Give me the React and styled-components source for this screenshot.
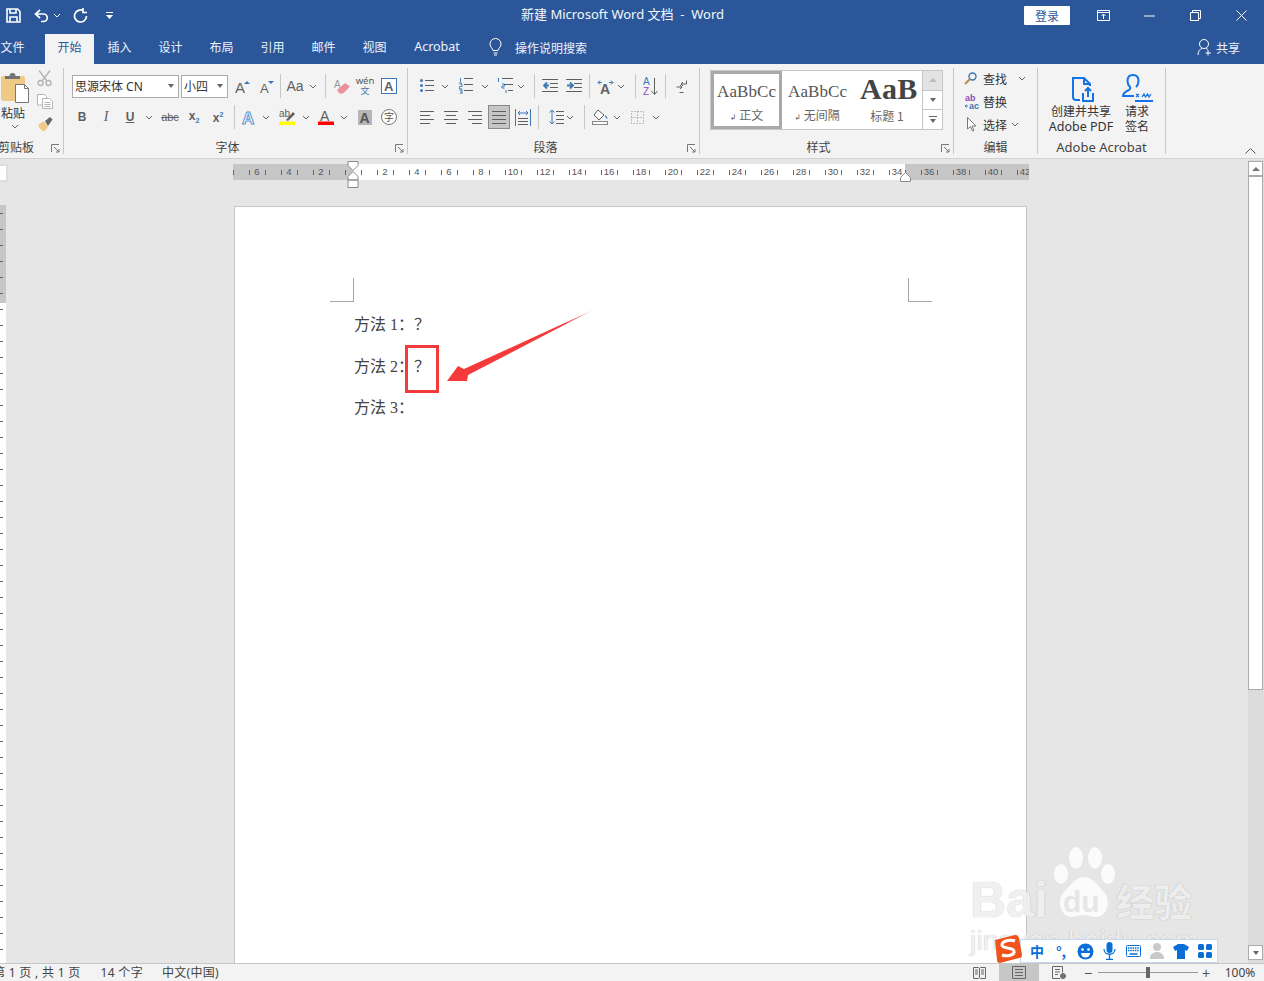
import React from 'react';
import styled, { createGlobalStyle } from 'styled-components';

const UI = '"Noto Sans CJK SC", "Noto Sans", sans-serif';
const LATIN = '"Noto Sans", "Noto Sans CJK SC", sans-serif';
const BLUE = '#2b579a';
const GREY = '#5f5f5f';
const ICON_BLUE = '#3b78b5';
const ACROBAT = '#1473e6';
const IME = '#0a6ed6';

const Global = createGlobalStyle`
  html, body { margin: 0; padding: 0; background: #e6e6e6; }
  body { font-family: ${UI}; font-size: 12px; color: #444; }
`;

const Window = styled.div`
  position: relative;
  width: 1264px;
  height: 981px;
  overflow: hidden;
  display: flex;
  flex-direction: column;
`;

/* title bar */
const TitleBar = styled.div`
  flex: 0 0 34px;
  display: flex;
  align-items: center;
  background: ${BLUE};
  color: #fff;
  padding-bottom: 3px;
  box-sizing: border-box;
`;
const QuickAccess = styled.div`
  flex: 0 0 521px;
  display: flex;
  align-items: center;
`;
const QuickBtn = styled.div`
  flex: 0 0 ${(p) => p.$w}px;
  width: ${(p) => p.$w}px;
  display: flex;
  justify-content: center;
  & > * { flex-shrink: 0; }
`;
const DocTitle = styled.div`
  font-family: ${LATIN};
  font-size: 13px;
  white-space: pre;
  color: #f4f7fb;
  margin-bottom: 4px;
`;
const WinControls = styled.div`
  margin-left: auto;
  display: flex;
  align-items: center;
`;
const LoginBtn = styled.div`
  width: 46px;
  height: 19px;
  margin-right: 10px;
  background: #fff;
  border-radius: 1px;
  color: ${BLUE};
  font-size: 12px;
  line-height: 19px;
  text-align: center;
`;
const WinBtn = styled.div`
  width: 46px;
  display: flex;
  justify-content: center;
`;

/* tabs */
const TabBar = styled.div`
  flex: 0 0 30px;
  display: flex;
  align-items: stretch;
  background: ${BLUE};
  color: #eef2f8;
`;
const Tab = styled.div`
  flex: 0 0 auto;
  width: ${(p) => (p.$active ? 49 : p.$w || 51)}px;
  margin-left: ${(p) => p.$ml || 0}px;
  display: flex;
  align-items: center;
  justify-content: center;
  font-size: ${(p) => (p.$latin ? 12.5 : 12)}px;
  padding-bottom: 5px;
  box-sizing: border-box;
  background: ${(p) => (p.$active ? '#f3f3f3' : 'transparent')};
  color: ${(p) => (p.$active ? BLUE : '#eef2f8')};
  font-family: ${(p) => (p.$latin ? LATIN : UI)};
`;
const SearchHint = styled.div`
  display: flex;
  align-items: center;
  gap: 13px;
  margin-left: 15px;
  padding-bottom: 4px;
  font-size: 12px;
`;
const ShareBtn = styled.div`
  margin-left: auto;
  padding: 0 24px 4px 0;
  display: flex;
  align-items: center;
  gap: 4px;
  font-size: 12px;
`;

/* ribbon */
const Ribbon = styled.div`
  flex: 0 0 95px;
  min-height: 0;
  box-sizing: border-box;
  display: flex;
  padding: 4px 0 4px;
  background: #f3f3f3;
  border-bottom: 1px solid #d2d2d2;
`;
const Group = styled.div`
  flex: 0 0 ${(p) => p.$w}px;
  height: 86px;
  box-sizing: border-box;
  display: flex;
  flex-direction: column;
  border-right: 1px solid #c6c6c6;
`;
const GroupBody = styled.div`
  flex: 1;
  min-height: 0;
  display: ${(p) => (p.$row ? 'flex' : 'block')};
  padding-left: ${(p) => p.$pl || 0}px;
  padding-top: ${(p) => (p.$pt === undefined ? 6 : p.$pt)}px;
  margin-top: ${(p) => p.$mt || 0}px;
`;
const GroupFoot = styled.div`
  flex: 0 0 14px;
  display: flex;
  align-items: center;
`;
const GroupLabel = styled.div`
  flex: 1;
  text-align: center;
  font-size: ${(p) => (p.$latin ? 13 : 12)}px;
  line-height: 14px;
  color: #444;
  white-space: nowrap;
  margin-left: ${(p) => p.$ml || 0}px;
  font-family: ${(p) => (p.$latin ? LATIN : UI)};
`;
const Launcher = styled.div`
  flex: 0 0 16px;
  display: flex;
  justify-content: center;
  padding-top: 3px;
`;
const Row = styled.div`
  display: flex;
  align-items: center;
  height: 24px;
  margin-bottom: 7px;
`;
const Cell = styled.div`
  flex: 0 0 ${(p) => p.$w}px;
  width: ${(p) => p.$w}px;
  height: 24px;
  margin-left: ${(p) => p.$ml || 0}px;
  display: flex;
  align-items: center;
  justify-content: center;
  box-sizing: border-box;
  background: ${(p) => (p.$on ? '#c6c6c6' : 'transparent')};
  border: ${(p) => (p.$on ? '1px solid #8a8a8a' : 'none')};
  & > * { flex-shrink: 0; }
`;
const VSep = styled.div`
  flex: 0 0 ${(p) => p.$w}px;
  height: 24px;
  margin-left: ${(p) => p.$ml || 0}px;
  display: flex;
  justify-content: center;
  &::after {
    content: '';
    width: 1px;
    height: 100%;
    background: #c6c6c6;
  }
`;
const Glyph = styled.span`
  font-family: ${(p) => p.$font || '"Liberation Sans", sans-serif'};
  font-size: ${(p) => p.$size || 12}px;
  font-weight: ${(p) => p.$weight || 400};
  font-style: ${(p) => (p.$italic ? 'italic' : 'normal')};
  color: ${(p) => p.$color || GREY};
  text-decoration: ${(p) => p.$deco || 'none'};
  line-height: 1;
  white-space: nowrap;
`;
const Select = styled.div`
  flex: 0 0 ${(p) => p.$w}px;
  height: 23px;
  box-sizing: border-box;
  margin-right: ${(p) => p.$mr || 0}px;
  padding: 0 4px 0 2px;
  display: flex;
  align-items: center;
  justify-content: space-between;
  background: #fff;
  border: 1px solid #ababab;
  font-size: 12px;
  color: #333;
  font-family: ${LATIN};
`;
const Caret = styled.span`
  width: 0;
  height: 0;
  border-left: 3.5px solid transparent;
  border-right: 3.5px solid transparent;
  border-top: 4px solid ${(p) => p.$color || '#666'};
`;

/* clipboard */
const PasteCol = styled.div`
  flex: 0 0 30px;
  display: flex;
  flex-direction: column;
  align-items: flex-start;
  padding-top: 4px;
`;
const PasteLabel = styled.div`
  font-size: 12px;
  line-height: 15px;
  margin: 2px 0 4px 1px;
  color: #333;
`;
const PasteChevron = styled.div`
  width: 30px;
  height: 6px;
  display: flex;
  justify-content: center;
`;
const ClipTools = styled.div`
  flex: 1;
  display: flex;
  flex-direction: column;
  align-items: center;
  margin-top: -1px;
  padding-right: 4px;
`;
const ClipTool = styled.div`
  height: 23px;
  display: flex;
  align-items: center;
`;

/* styles gallery */
const Gallery = styled.div`
  margin: 2px 0 0 10px;
  width: 233px;
  height: 60px;
  box-sizing: border-box;
  display: flex;
  background: #fff;
  border: 1px solid #c6c6c6;
`;
const StyleItem = styled.div`
  flex: 0 0 ${(p) => p.$w}px;
  box-sizing: border-box;
  overflow: hidden;
  display: flex;
  flex-direction: column;
  align-items: center;
  border: ${(p) => (p.$on ? '3px solid #a9a9a9' : '3px solid transparent')};
`;
const StyleSample = styled.div`
  height: 33px;
  display: flex;
  align-items: center;
  font-family: "Liberation Serif", serif;
  font-size: ${(p) => (p.$big ? 30 : 17)}px;
  font-weight: ${(p) => (p.$big ? 700 : 400)};
  color: ${(p) => (p.$big ? '#444' : '#555')};
  white-space: nowrap;
  letter-spacing: ${(p) => (p.$big ? 0.3 : 0.1)}px;
  width: 100%;
  padding: ${(p) => (p.$big ? '0 0 3px 5px' : '3px 0 0 3px')};
  box-sizing: border-box;
`;
const StyleName = styled.div`
  font-size: 12px;
  line-height: 16px;
  margin-top: 1px;
  color: #666;
  font-family: ${UI};
  white-space: nowrap;
`;
const Para = styled.span`
  font-family: "DejaVu Sans", sans-serif;
  font-size: 8px;
  margin-right: 3px;
  color: #666;
`;
const GalleryScroll = styled.div`
  flex: 1;
  display: flex;
  flex-direction: column;
  border-left: 1px solid #c6c6c6;
`;
const ScrollCell = styled.div`
  flex: 1;
  display: flex;
  align-items: center;
  justify-content: center;
  flex-direction: column;
  gap: 2px;
  background: ${(p) => (p.$off ? '#e3e3e3' : '#fff')};
  border-top: ${(p) => (p.$first ? 'none' : '1px solid #c6c6c6')};
`;
const UpCaret = styled.span`
  width: 0;
  height: 0;
  border-left: 4px solid transparent;
  border-right: 4px solid transparent;
  border-bottom: 4px solid ${(p) => p.$color || '#777'};
`;
const CaretBar = styled.span`
  width: 8px;
  height: 1px;
  background: #666;
`;

/* editing */
const EditRow = styled.div`
  height: 23px;
  display: flex;
  align-items: center;
  padding-left: ${(p) => p.$pl || 10}px;
`;
const EditIcon = styled.div`
  flex: 0 0 ${(p) => p.$w || 19}px;
  display: flex;
  justify-content: flex-start;
`;
const EditText = styled.div`
  font-size: 12px;
  color: #333;
  margin-right: ${(p) => p.$mr || 0}px;
`;

/* acrobat */
const BigBtn = styled.div`
  flex: 0 0 ${(p) => p.$w}px;
  display: flex;
  flex-direction: column;
  align-items: center;
  padding-top: 4px;
`;
const BigIcon = styled.div`
  height: 30px;
  display: flex;
  align-items: flex-end;
  padding-left: ${(p) => p.$pl || 0}px;
`;
const BigText = styled.div`
  margin-top: 2px;
  text-align: center;
  font-size: 12px;
  line-height: 15px;
  color: #333;
  font-family: ${LATIN};
  white-space: nowrap;
`;
const LatinLine = styled.span`
  font-size: 12.5px;
`;
const Collapse = styled.div`
  flex: 1;
  display: flex;
  align-items: flex-end;
  justify-content: flex-end;
  padding: 0 8px 0 0;
`;

/* document */
const DocArea = styled.div`
  flex: 1;
  min-height: 0;
  display: flex;
  background: #e6e6e6;
  overflow: hidden;
`;
const VColumn = styled.div`
  flex: 0 0 8px;
  display: flex;
  flex-direction: column;
  overflow: hidden;
`;
const TabPicker = styled.div`
  margin-top: 5px;
  height: 18px;
  width: 8px;
  flex: 0 0 auto;
  box-sizing: border-box;
  background: #fff;
  border: 2px solid #dedede;
  border-left: none;
`;
const VRuler = styled.div`
  margin-top: 23px;
  width: 6px;
  flex: 1;
  overflow: hidden;
  background: linear-gradient(#c6c6c6 0, #c6c6c6 98px, #fff 98px);
`;
const VTick = styled.div`
  height: 16px;
  display: flex;
  align-items: center;
  &::before {
    content: '';
    width: 3px;
    height: 1px;
    background: #666;
  }
`;
const DocCenter = styled.div`
  flex: 1;
  min-width: 0;
  display: flex;
  flex-direction: column;
`;
const RulerWrap = styled.div`
  position: relative;
  flex: 0 0 16px;
  margin: 5px 0 0 225px;
  width: 796px;
`;
const RulerTrack = styled.div`
  height: 16px;
  overflow: hidden;
  display: flex;
  background: linear-gradient(90deg, #c6c6c6 0, #c6c6c6 120px, #fff 120px, #fff 672px, #c6c6c6 672px);
`;
const RulerCell = styled.div`
  flex: 0 0 32px;
  display: flex;
  align-items: center;
  justify-content: center;
  margin-left: ${(p) => p.$ml || 0}px;
`;
const RulerTick = styled.span`
  flex: 0 0 1px;
  height: 5px;
  background: #666;
`;
const RulerNum = styled.span`
  flex: 0 0 15px;
  text-align: center;
  font-family: "Liberation Sans", sans-serif;
  font-size: 9.5px;
  line-height: 16px;
  color: #555;
`;
const RulerMarker = styled.svg`
  position: absolute;
  top: ${(p) => p.$top}px;
  left: ${(p) => p.$left}px;
`;
const Page = styled.div`
  position: relative;
  margin: 26px 0 0 226px;
  width: 793px;
  flex: 1;
  box-sizing: border-box;
  background: #fff;
  border: 1px solid #c6c6c6;
  border-bottom: none;
  padding: 71px 94px 0 95px;
`;
const CropMarks = styled.div`
  display: flex;
  justify-content: space-between;
`;
const CropMark = styled.div`
  width: 23px;
  height: 23px;
  border-bottom: 1px solid #a6a6a6;
  border-right: ${(p) => (p.$left ? '1px solid #a6a6a6' : 'none')};
  border-left: ${(p) => (p.$left ? 'none' : '1px solid #a6a6a6')};
`;
const BodyText = styled.div`
  margin-top: 2px;
  padding-left: 24px;
`;
const Line = styled.p`
  margin: 0;
  font-family: "Liberation Serif", "Noto Sans CJK SC", serif;
  font-size: 16px;
  line-height: 41.5px;
  height: 41.5px;
  color: #444;
  white-space: pre;
`;
const RedBox = styled.div`
  position: absolute;
  left: 170px;
  top: 138px;
  width: 34px;
  height: 48px;
  box-sizing: border-box;
  border: 3px solid #f43a3a;
`;
const ArrowSvg = styled.svg`
  position: absolute;
  left: 212px;
  top: 103px;
`;
const Scrollbar = styled.div`
  flex: 0 0 16px;
  margin-top: 1px;
  box-sizing: border-box;
  display: flex;
  flex-direction: column;
  align-items: stretch;
  background: #dcdcdc;
`;
const ScrollBtn = styled.div`
  flex: 0 0 15px;
  margin: ${(p) => p.$m || 0};
  width: 15px;
  box-sizing: border-box;
  display: flex;
  align-items: center;
  justify-content: center;
  background: #fff;
  border: 1px solid #ababab;
`;
const ScrollThumb = styled.div`
  flex: 0 0 514px;
  width: 15px;
  box-sizing: border-box;
  background: #fff;
  border: 1px solid #ababab;
`;
const ScrollGap = styled.div`
  flex: 1;
`;

/* status bar */
const StatusBar = styled.div`
  flex: 0 0 18px;
  box-sizing: border-box;
  display: flex;
  align-items: center;
  background: #f3f3f3;
  border-top: 1px solid #c6c6c6;
  font-family: ${LATIN};
  font-size: 12px;
  color: #444;
  white-space: pre;
`;
const StatusText = styled.span`
  margin-left: ${(p) => p.$ml}px;
  line-height: 17px;
  letter-spacing: 0.3px;
`;
const ViewBtn = styled.div`
  flex: 0 0 ${(p) => p.$w}px;
  height: 17px;
  display: flex;
  align-items: center;
  justify-content: center;
  background: ${(p) => (p.$on ? '#c6c6c6' : 'transparent')};
`;
const StatusRight = styled.div`
  margin-left: auto;
  display: flex;
  align-items: center;
`;
const ZoomTrack = styled.div`
  position: relative;
  width: 100px;
  height: 1px;
  background: #999;
  margin-left: 1px;
  &::after {
    content: '';
    position: absolute;
    left: 48px;
    top: -5px;
    width: 4px;
    height: 11px;
    background: #666;
  }
`;
const ZoomSign = styled.span`
  flex: 0 0 ${(p) => p.$w}px;
  text-align: center;
  font-family: "Liberation Sans", sans-serif;
  font-size: 14px;
  line-height: 16px;
  color: #555;
`;
const ZoomValue = styled.span`
  flex: 0 0 48px;
  text-align: center;
  font-family: ${LATIN};
  font-size: 12px;
  margin-left: 2px;
`;

/* overlays */
const Watermark = styled.div`
  position: absolute;
  left: 968px;
  top: 845px;
  width: 232px;
  pointer-events: none;
  color: rgba(255, 255, 255, 0.82);
  text-shadow: 0 0 1px rgba(90, 90, 90, 0.5);
`;
const WmTop = styled.div`
  display: flex;
  align-items: flex-end;
  height: 77px;
`;
const WmBai = styled.span`
  font-family: "Liberation Sans", sans-serif;
  font-size: 50px;
  font-weight: 700;
  line-height: 44px;
  width: 94px;
  margin-left: 2px;
`;
const WmExp = styled.span`
  font-size: 38px;
  font-weight: 700;
  line-height: 44px;
  margin-left: 52px;
  white-space: nowrap;
`;
const WmPaw = styled.svg`
  position: absolute;
  left: 84px;
  top: 0;
`;
const WmDu = styled.span`
  position: absolute;
  left: 95px;
  top: 40px;
  font-family: "Liberation Sans", sans-serif;
  font-size: 30px;
  font-weight: 700;
  color: #e6e6e6;
  text-shadow: none;
`;
const WmUrl = styled.div`
  font-family: "Liberation Sans", sans-serif;
  font-size: 28px;
  line-height: 34px;
  white-space: nowrap;
  margin: 2px 0 0 2px;
  letter-spacing: 0.2px;
`;
const ImeBar = styled.div`
  position: absolute;
  left: 1020px;
  top: 939px;
  width: 198px;
  height: 24px;
  box-sizing: border-box;
  display: flex;
  align-items: center;
  padding-left: 4px;
  background: #fff;
  border: 1px solid #c9d8ef;
`;
const ImeCell = styled.div`
  flex: 0 0 24px;
  display: flex;
  align-items: center;
  justify-content: center;
  color: ${IME};
  font-size: 14px;
  font-weight: 700;
`;
const SogouLogo = styled.svg`
  position: absolute;
  left: 992px;
  top: 934px;
`;

/* drawings */
const Chev = ({ color = '#666' }) => (
  <svg width="8" height="5" viewBox="0 0 8 5"><path d="M1 1l3 3 3-3" fill="none" stroke={color} /></svg>
);
const Lines = ({ rows, w = 16, h = 14, color = GREY, children }) => (
  <svg width={w} height={h} viewBox={`0 0 ${w} ${h}`}>
    {rows.map(([a, b, y], i) => <path key={i} d={`M${a} ${y + 0.5}H${b}`} stroke={color} />)}
    {children}
  </svg>
);
const LauncherIcon = () => (
  <svg width="9" height="9" viewBox="0 0 9 9"><path d="M.5 8V.5H8M3 3l5 5M8 5v3H5" fill="none" stroke="#777" /></svg>
);
const Save = () => (
  <svg width="15" height="15" viewBox="0 0 15 15" fill="none" stroke="#fff" strokeWidth="1.6">
    <path d="M1 1h10.5L14 3.5V14H1zM4 1v4h6V1M4 14V9h7v5" />
  </svg>
);
const Undo = () => (
  <svg width="15" height="14" viewBox="0 0 15 14" fill="none" stroke="#fff" strokeWidth="1.7">
    <path d="M6 1L1.5 5 6 9M2 5h7.5a3.7 3.7 0 0 1 0 7.5H7" />
  </svg>
);
const Redo = () => (
  <svg width="15" height="15" viewBox="0 0 15 15" fill="none" stroke="#fff" strokeWidth="1.7">
    <path d="M10.5 2.8A6 6 0 1 0 13.5 8M10 0v4.5h4" />
  </svg>
);
const Customize = () => (
  <svg width="7" height="8" viewBox="0 0 7 8" fill="#fff"><path d="M0 0h7v1H0zM0 3h7L3.5 7z" /></svg>
);
const RibbonDisplay = () => (
  <svg width="13" height="11" viewBox="0 0 13 11" fill="none" stroke="#fff"><path d="M.5.5h12v10H.5zM.5 2.5h12M6.500 9V4.500M4.500 6l2-2 2 2" /></svg>
);
const Minimize = () => <svg width="11" height="11" viewBox="0 0 11 11"><path d="M0 6h11" stroke="#fff" /></svg>;
const Restore = () => (
  <svg width="11" height="11" viewBox="0 0 11 11" fill="none" stroke="#fff"><path d="M.5 2.500h8v8h-8zM2.500 2.500v-2h8v8h-2" /></svg>
);
const Close = () => <svg width="11" height="11" viewBox="0 0 11 11"><path d="M.5.5l10 10M10.500.5l-10 10" stroke="#fff" /></svg>;
const Bulb = () => (
  <svg width="13" height="18" viewBox="0 0 13 18" fill="none" stroke="#fff"><path d="M4 12.500C3.500 10 1 9 1 6a5.500 5.500 0 0 1 11 0c0 3-2.500 4-3 6.500zM4.500 15h4M5 17h3" /></svg>
);
const Person = () => (
  <svg width="15" height="18" viewBox="0 0 15 18" fill="none" stroke="#fff"><circle cx="7" cy="6" r="4.500" /><path d="M1 17c0-4 2-6 4-6.500M9 10.500c.7.200 1.300.5 1.800 1M11 12v5.500M8.500 15H14" /></svg>
);
const Paste = () => (
  <svg width="30" height="31" viewBox="0 0 30 31">
    <rect x="1" y="4" width="24" height="25" rx="2" fill="#f0c986" />
    <path d="M5 7V4h4.500a3 3 0 0 1 6 0H20v3z" fill="#737373" />
    <path d="M15.500 12.500h9l4 4v14h-13z" fill="#fff" stroke="#777" />
    <path d="M24.500 12.500v4h4" fill="none" stroke="#777" />
  </svg>
);
const Scissors = () => (
  <svg width="15" height="17" viewBox="0 0 15 17" fill="none" stroke="#b5b5b5" strokeWidth="1.400">
    <circle cx="3.500" cy="13" r="2.500" /><circle cx="11.500" cy="13" r="2.500" /><path d="M2 .5l8 10.500M13 .5L5 11" />
  </svg>
);
const Copy = () => (
  <svg width="16" height="15" viewBox="0 0 16 15" fill="#fff" stroke="#b5b5b5">
    <path d="M.5.5h7l2 2V11H.5z" /><path d="M5.500 4.500h7l3 3v7h-10z" /><path d="M7.500 8.500h6M7.500 10.500h6M7.500 12.500h6" />
  </svg>
);
const Brush = () => (
  <svg width="16" height="15" viewBox="0 0 16 15">
    <path d="M1 8l6-4 4 6-4 4.500C5 14 2 11 1 8z" fill="#f0c986" />
    <path d="M8 4l5-4 2.500 2.500L11 9z" fill="#666" />
  </svg>
);
const SizeA = ({ dir }) => (
  <svg width="15" height="16" viewBox="0 0 15 16">
    <text x={dir === 'up' ? 0 : 1} y="15" fontFamily="Liberation Sans" fontSize={dir === 'up' ? 15 : 13} fill={GREY}>A</text>
    <path d={dir === 'up' ? 'M9 6l3-3 3 3z' : 'M9 3h6l-3 3z'} fill={ICON_BLUE} />
  </svg>
);
const Eraser = () => (
  <svg width="17" height="15" viewBox="0 0 17 15">
    <text x="0" y="9" fontFamily="Liberation Sans" fontSize="10" fill="#999">A</text>
    <path d="M3 11l8-7 5 3.500-7 7H5.500z" fill="#ee8f9e" />
  </svg>
);
const FontBox = () => (
  <svg width="16" height="16" viewBox="0 0 16 16">
    <rect x=".5" y=".5" width="15" height="15" fill="#fff" stroke={ICON_BLUE} />
    <text x="3" y="13" fontFamily="Liberation Sans" fontWeight="700" fontSize="13" fill={GREY}>A</text>
  </svg>
);
const Wen = styled.div`
  display: flex;
  flex-direction: column;
  align-items: center;
  font-family: ${LATIN};
  font-size: 9.5px;
  line-height: 10px;
  color: #555;
`;
const WenZi = styled.span`
  font-size: 9px;
  line-height: 10px;
  color: ${ICON_BLUE};
  font-family: ${UI};
`;
const ColorA = ({ color }) => (
  <svg width="16" height="16" viewBox="0 0 16 16">
    <text x="2" y="12" fontFamily="Liberation Sans" fontSize="14" fill={GREY}>A</text>
    <rect y="12.500" width="16" height="3.500" fill={color} />
  </svg>
);
const Highlight = () => (
  <svg width="16" height="16" viewBox="0 0 16 16">
    <text x="0" y="8" fontFamily="Liberation Sans" fontSize="10" fill={GREY}>ab</text>
    <path d="M7 11l7-8 2 2-7 7z" fill={GREY} />
    <rect y="12.500" width="16" height="3.500" fill="#ffff00" />
  </svg>
);
const GlowA = () => (
  <svg width="16" height="17" viewBox="0 0 16 17">
    <text x="1" y="15" fontFamily="Liberation Sans" fontWeight="700" fontSize="17" fill="#fff" stroke="#5b93cf">A</text>
  </svg>
);
const Shade = () => (
  <svg width="14" height="15" viewBox="0 0 14 15">
    <rect width="14" height="15" fill="#b6b6b6" />
    <text x="1.500" y="13" fontFamily="Liberation Sans" fontWeight="700" fontSize="14" fill="#555">A</text>
  </svg>
);
const Circled = () => (
  <svg width="16" height="16" viewBox="0 0 16 16">
    <circle cx="8" cy="8" r="7.500" fill="#fff" stroke="#777" />
    <text x="3" y="12" fontFamily="Noto Sans CJK SC" fontSize="10" fill="#555">字</text>
  </svg>
);
const BLines = [[5, 14, 1], [5, 14, 6], [5, 14, 11]];
const Bullets = () => (
  <Lines rows={BLines} w={14}>
    <circle cx="1.500" cy="1.500" r="1.500" fill={ICON_BLUE} /><circle cx="1.500" cy="6.500" r="1.500" fill={ICON_BLUE} /><circle cx="1.500" cy="11.500" r="1.500" fill={ICON_BLUE} />
  </Lines>
);
const Numbered = () => (
  <Lines rows={[[5, 14, 0], [5, 14, 6], [5, 14, 12]]} w={14} h={16}>
    <path d="M1.500 0v4M0 5h3M.5 6h2.500v2.500H.5V11h3M.5 12h2.500v4H.5M1 14h2" fill="none" stroke={ICON_BLUE} strokeWidth=".9" />
  </Lines>
);
const Multilevel = () => (
  <Lines rows={[[5, 16, 0], [8, 16, 6], [11, 16, 12]]} w={16} h={16}>
    <path d="M1.500 0v4M5 6h2.500v2H5v2h2.500M9 12v3" fill="none" stroke={ICON_BLUE} strokeWidth="1" />
  </Lines>
);
const Outdent = ({ flip }) => (
  <Lines rows={[[0, 16, 0], [8, 16, 4], [8, 16, 8], [0, 16, 12]]}>
    <path d={flip ? 'M1 6.500h5M4 3.500l3 3-3 3' : 'M2 6.500h5M5 3.500l-3 3 3 3'} fill="none" stroke={ICON_BLUE} strokeWidth="1.800" />
  </Lines>
);
const AsianLayout = () => (
  <svg width="17" height="15" viewBox="0 0 17 15">
    <path d="M1 3.500h4M1 3.500l2-2M1 3.500l2 2M16 3.500h-4M16 3.500l-2-2M16 3.500l-2 2" fill="none" stroke={ICON_BLUE} />
    <text x="3" y="15" fontFamily="Liberation Sans" fontWeight="700" fontSize="14" fill={GREY}>A</text>
  </svg>
);
const Sort = () => (
  <svg width="15" height="19" viewBox="0 0 15 19">
    <text x="0" y="8" fontFamily="Liberation Sans" fontSize="10" fill={ICON_BLUE}>A</text>
    <text x="0" y="18" fontFamily="Liberation Sans" fontSize="10" fill="#8a4fb3">Z</text>
    <path d="M11.500 1v16M8.500 14l3 3.500 3-3.500" fill="none" stroke={GREY} />
  </svg>
);
const ParaMark = () => (
  <svg width="11" height="13" viewBox="0 0 11 13" fill="none" stroke={GREY}>
    <path d="M10.500.5V4H5M7 2L5 4l2 2M.5 7H6M4 5l2 2-2 2M3.500 12.500h4" />
  </svg>
);
const ALIGN = {
  left: [[0, 14, 0], [0, 10, 4], [0, 14, 8], [0, 10, 12]],
  center: [[0, 14, 0], [2, 12, 4], [0, 14, 8], [2, 12, 12]],
  right: [[0, 14, 0], [4, 14, 4], [0, 14, 8], [4, 14, 12]],
  justify: [[0, 14, 0], [0, 14, 4], [0, 14, 8], [0, 14, 12]],
};
const Align = ({ kind }) => <Lines rows={ALIGN[kind]} w={14} h={13} />;
const Distributed = () => (
  <Lines rows={[[3, 13, 9], [3, 13, 12], [3, 13, 15]]} h={17}>
    <path d="M.5 0v17M15.500 0v17M3 4h10M3 4l2-2M3 4l2 2M13 4l-2-2M13 4l-2 2" fill="none" stroke={ICON_BLUE} />
  </Lines>
);
const Spacing = () => (
  <Lines rows={[[7, 15, 2], [7, 15, 6], [7, 15, 10], [7, 15, 14]]} w={15} h={17}>
    <path d="M3 1v14M.5 3.500L3 1l2.500 2.500M.5 12.500L3 15l2.500-2.500" fill="none" stroke={ICON_BLUE} />
  </Lines>
);
const Fill = () => (
  <svg width="17" height="16" viewBox="0 0 17 16">
    <path d="M6 1l6 5-5 5-5-5z" fill="#fff" stroke={GREY} />
    <path d="M13 6c2 1.500 3 3 2 4-1-1-2-2-2-4z" fill={ICON_BLUE} />
    <rect x=".5" y="12.500" width="15" height="3" fill="#fff" stroke="#888" />
  </svg>
);
const Borders = () => (
  <svg width="13" height="13" viewBox="0 0 13 13" fill="none" stroke="#888" strokeDasharray="1 2">
    <path d="M.5.500h12v12H.5zM6.500.5v12M.5 6.500h12" />
  </svg>
);
const Search = () => (
  <svg width="13" height="13" viewBox="0 0 13 13" fill="none">
    <circle cx="8.500" cy="4.500" r="3.500" stroke={ICON_BLUE} strokeWidth="1.400" />
    <path d="M6 7L1 12" stroke="#b58a4a" strokeWidth="2" />
  </svg>
);
const Replace = () => (
  <svg width="16" height="15" viewBox="0 0 16 15">
    <text x="1" y="7" fontFamily="Liberation Sans" fontWeight="700" fontSize="9" fill="#8a4fb3">ab</text>
    <text x="5" y="15" fontFamily="Liberation Sans" fontWeight="700" fontSize="9" fill={ICON_BLUE}>ac</text>
    <path d="M1 12h3M2.500 10.500L1 12l1.500 1.500" fill="none" stroke={ICON_BLUE} />
  </svg>
);
const Pointer = () => (
  <svg width="10" height="15" viewBox="0 0 10 15"><path d="M.5.500v11.500l3-2.500 2 4.500 1.500-.5-2-4.500h4z" fill="#fff" stroke="#777" /></svg>
);
const CreatePdf = () => (
  <svg width="24" height="26" viewBox="0 0 24 26" fill="none" stroke={ACROBAT} strokeWidth="2">
    <path d="M9 24H5a3 3 0 0 1-3-3V2h11l6 6v2M13 2v6h6M12 17v8h10v-8M17 21v-9M14 15l3-3 3 3" />
  </svg>
);
const SignIcon = () => (
  <svg width="32" height="28" viewBox="0 0 32 28" fill="none" stroke={ACROBAT}>
    <path strokeWidth="2" d="M12 1c-4 0-5.500 3-5.500 6 0 3 1.500 5 2.500 6 1 1 0 2.500-2 3.500C5 17.500 2 19 2 22h11M12 1c4 0 5.500 3 5.500 6 0 3-1.500 5-2.500 6" />
    <path strokeWidth="2" d="M14 27h18" />
    <path strokeWidth="1.300" d="M15 20l3 3M18 20l-3 3M21 23l2-3 1.500 3 2-3 1.500 3 2-3" />
  </svg>
);
const CollapseIcon = () => (
  <svg width="11" height="6" viewBox="0 0 11 6"><path d="M.5 5.500l5-5 5 5" fill="none" stroke="#555" /></svg>
);
const IndentTop = () => (
  <RulerMarker $top={-3} $left={120 - 6} width="12" height="28" viewBox="0 0 12 28" fill="#fff" stroke="#8a8a8a">
    <path d="M1 .5h10v4L6 9.500 1 4.500zM6 10.500l5 5V19H1v-3.500zM1 19h10v7.500H1z" />
  </RulerMarker>
);
const IndentRight = () => (
  <RulerMarker $top={8} $left={672 - 5} width="11" height="10" viewBox="0 0 11 10" fill="#fff" stroke="#8a8a8a">
    <path d="M5.500.5l5 5v4H.5v-4z" />
  </RulerMarker>
);
const ViewRead = () => (
  <svg width="13" height="13" viewBox="0 0 13 13" fill="none" stroke="#666"><path d="M.5 1.500h5l1 1 1-1h5v11h-5l-1-1-1 1h-5zM6.500 2.500v9M2 4h3M2 6h3M2 8h3M8 4h3M8 6h3M8 8h3" /></svg>
);
const ViewPrint = () => (
  <svg width="14" height="13" viewBox="0 0 14 13" fill="none" stroke="#666"><path d="M.5.500h13v12H.5zM3 3.500h8M3 6.500h8M3 9.500h8" /></svg>
);
const ViewWeb = () => (
  <svg width="14" height="13" viewBox="0 0 14 13" fill="none" stroke="#666"><path d="M8 12.500H.5V.5h10v6M3 3.500h5M3 6h5M3 8.500h3" /><circle cx="11" cy="10" r="2.500" fill="#777" /></svg>
);
const Smile = () => (
  <svg width="17" height="17" viewBox="0 0 17 17"><circle cx="8.500" cy="8.500" r="8" fill={IME} /><circle cx="5.500" cy="6.500" r="1.300" fill="#fff" /><circle cx="11.500" cy="6.500" r="1.300" fill="#fff" /><path d="M4 10h9a4.500 4.500 0 0 1-9 0z" fill="#fff" /></svg>
);
const Mic = () => (
  <svg width="13" height="18" viewBox="0 0 13 18" fill="none"><rect x="3.500" width="6" height="11" rx="3" fill={IME} /><path d="M1 7c0 7 11 7 11 0M6.500 13v4M3 17.500h7" stroke={IME} strokeWidth="1.300" /></svg>
);
const Keyboard = () => (
  <svg width="15" height="12" viewBox="0 0 15 12" fill="none"><rect x=".5" y=".5" width="14" height="11" rx="1" stroke={IME} /><path d="M2 3h11M2 5.500h11" stroke={IME} strokeWidth="1.500" strokeDasharray="1.500 .8" /><path d="M3.500 9h8" stroke={IME} strokeWidth="1.500" /></svg>
);
const Skin = () => (
  <svg width="14" height="16" viewBox="0 0 14 16" fill="#c9c9c9"><circle cx="7" cy="4" r="4" /><path d="M0 16c0-5 3-7 7-7s7 2 7 7z" /></svg>
);
const Shirt = () => (
  <svg width="16" height="15" viewBox="0 0 16 15" fill={IME}><path d="M5 0h6l5 3-2 4-2-1v9H4V6L2 7 0 3z" /></svg>
);
const Apps = () => (
  <svg width="14" height="14" viewBox="0 0 14 14" fill={IME}><rect width="6" height="6" rx="1.500" /><rect x="8" width="6" height="6" rx="1.500" /><rect y="8" width="6" height="6" rx="1.500" /><rect x="8" y="8" width="6" height="6" rx="1.500" /></svg>
);

const RULER = Array.from({ length: 26 }, (_, i) => {
  const value = (i - 4) * 2;
  return { key: i, label: value === 0 || i === 0 ? '' : String(Math.abs(value)) };
});
const V_TICKS = Array.from({ length: 48 }, (_, i) => i);
const TABS = ['插入', '设计', '布局', '引用', '邮件', '视图'];

function TitleRow() {
  return (
    <TitleBar>
      <QuickAccess>
        <QuickBtn $w={26}><Save /></QuickBtn>
        <QuickBtn $w={30}><Undo /></QuickBtn>
        <QuickBtn $w={2}><Chev color="#fff" /></QuickBtn>
        <QuickBtn $w={44}><Redo /></QuickBtn>
        <QuickBtn $w={14}><Customize /></QuickBtn>
      </QuickAccess>
      <DocTitle>新建 Microsoft Word 文档  -  Word</DocTitle>
      <WinControls>
        <LoginBtn>登录</LoginBtn>
        <WinBtn><RibbonDisplay /></WinBtn>
        <WinBtn><Minimize /></WinBtn>
        <WinBtn><Restore /></WinBtn>
        <WinBtn><Close /></WinBtn>
      </WinControls>
    </TitleBar>
  );
}

function Tabs() {
  return (
    <TabBar>
      <Tab $ml={-13}>文件</Tab>
      <Tab $active $ml={7}>开始</Tab>
      {TABS.map((t) => <Tab key={t}>{t}</Tab>)}
      <Tab $w={74} $latin>Acrobat</Tab>
      <SearchHint><Bulb />操作说明搜索</SearchHint>
      <ShareBtn><Person />共享</ShareBtn>
    </TabBar>
  );
}

function ClipboardGroup() {
  return (
    <Group $w={64}>
      <GroupBody $row $pt={0}>
        <PasteCol>
          <Paste />
          <PasteLabel>粘贴</PasteLabel>
          <PasteChevron><Chev /></PasteChevron>
        </PasteCol>
        <ClipTools>
          <ClipTool><Scissors /></ClipTool>
          <ClipTool><Copy /></ClipTool>
          <ClipTool><Brush /></ClipTool>
        </ClipTools>
      </GroupBody>
      <GroupFoot>
        <GroupLabel $ml={-15}>剪贴板</GroupLabel>
        <Launcher><LauncherIcon /></Launcher>
      </GroupFoot>
    </Group>
  );
}

function FontGroup() {
  return (
    <Group $w={344}>
      <GroupBody $pl={8}>
        <Row>
          <Select $w={107} $mr={2}>思源宋体 CN<Caret /></Select>
          <Select $w={47} $mr={2}>小四<Caret /></Select>
          <Cell $w={24}><SizeA dir="up" /></Cell>
          <Cell $w={24}><SizeA dir="down" /></Cell>
          <VSep $w={4} />
          <Cell $w={26}><Glyph $size={14}>Aa</Glyph></Cell>
          <Cell $w={10}><Chev /></Cell>
          <VSep $w={14} />
          <Cell $w={21}><Eraser /></Cell>
          <Cell $w={24}><Wen>wén<WenZi>文</WenZi></Wen></Cell>
          <Cell $w={24}><FontBox /></Cell>
        </Row>
        <Row>
          <Cell $w={20}><Glyph $weight={700}>B</Glyph></Cell>
          <Cell $w={28}><Glyph $italic $font={'"Liberation Serif", serif'} $size={14}>I</Glyph></Cell>
          <Cell $w={20}><Glyph $weight={700} $deco="underline">U</Glyph></Cell>
          <Cell $w={18}><Chev /></Cell>
          <Cell $w={24}><Glyph $size={11} $deco="line-through">abc</Glyph></Cell>
          <Cell $w={24}><Glyph $weight={700}>x<sub style={{ fontSize: 7, color: ICON_BLUE }}>2</sub></Glyph></Cell>
          <Cell $w={24}><Glyph $weight={700}>x<sup style={{ fontSize: 7, color: ICON_BLUE }}>2</sup></Glyph></Cell>
          <VSep $w={8} />
          <Cell $w={22}><GlowA /></Cell>
          <Cell $w={12}><Chev /></Cell>
          <Cell $w={30}><Highlight /></Cell>
          <Cell $w={8}><Chev /></Cell>
          <Cell $w={32}><ColorA color="#ff0000" /></Cell>
          <Cell $w={4}><Chev /></Cell>
          <Cell $w={38}><Shade /></Cell>
          <Cell $w={10}><Circled /></Cell>
        </Row>
      </GroupBody>
      <GroupFoot>
        <GroupLabel>字体</GroupLabel>
        <Launcher><LauncherIcon /></Launcher>
      </GroupFoot>
    </Group>
  );
}

function ParagraphGroup() {
  return (
    <Group $w={292}>
      <GroupBody $pl={7}>
        <Row>
          <Cell $w={24}><Bullets /></Cell>
          <Cell $w={12}><Chev /></Cell>
          <Cell $w={30}><Numbered /></Cell>
          <Cell $w={8}><Chev /></Cell>
          <Cell $w={32}><Multilevel /></Cell>
          <Cell $w={0}><Chev /></Cell>
          <VSep $ml={10} $w={6} />
          <Cell $w={26}><Outdent /></Cell>
          <Cell $w={22}><Outdent flip /></Cell>
          <VSep $ml={1} $w={6} />
          <Cell $w={26}><AsianLayout /></Cell>
          <Cell $w={6}><Chev /></Cell>
          <VSep $ml={8} $w={6} />
          <Cell $w={24}><Sort /></Cell>
          <VSep $w={6} />
          <Cell $w={26}><ParaMark /></Cell>
        </Row>
        <Row>
          <Cell $w={24}><Align kind="left" /></Cell>
          <Cell $w={24}><Align kind="center" /></Cell>
          <Cell $w={24}><Align kind="right" /></Cell>
          <Cell $ml={1} $w={22} $on><Align kind="justify" /></Cell>
          <Cell $w={26}><Distributed /></Cell>
          <VSep $w={4} />
          <Cell $ml={2} $w={28}><Spacing /></Cell>
          <Cell $w={0}><Chev /></Cell>
          <VSep $ml={11} $w={6} />
          <Cell $w={26}><Fill /></Cell>
          <Cell $w={8}><Chev /></Cell>
          <Cell $w={32}><Borders /></Cell>
          <Cell $w={6}><Chev /></Cell>
        </Row>
      </GroupBody>
      <GroupFoot>
        <GroupLabel>段落</GroupLabel>
        <Launcher><LauncherIcon /></Launcher>
      </GroupFoot>
    </Group>
  );
}

function StylesGroup() {
  return (
    <Group $w={254}>
      <GroupBody $pt={0}>
        <Gallery>
          <StyleItem $w={71} $on>
            <StyleSample>AaBbCc</StyleSample>
            <StyleName><Para>↲</Para>正文</StyleName>
          </StyleItem>
          <StyleItem $w={70}>
            <StyleSample>AaBbCc</StyleSample>
            <StyleName><Para>↲</Para>无间隔</StyleName>
          </StyleItem>
          <StyleItem $w={70}>
            <StyleSample $big>AaB</StyleSample>
            <StyleName>标题 1</StyleName>
          </StyleItem>
          <GalleryScroll>
            <ScrollCell $off $first><UpCaret $color="#bcbcbc" /></ScrollCell>
            <ScrollCell><Caret /></ScrollCell>
            <ScrollCell><CaretBar /><Caret /></ScrollCell>
          </GalleryScroll>
        </Gallery>
      </GroupBody>
      <GroupFoot>
        <GroupLabel>样式</GroupLabel>
        <Launcher><LauncherIcon /></Launcher>
      </GroupFoot>
    </Group>
  );
}

function EditGroup() {
  return (
    <Group $w={84}>
      <GroupBody $pt={0} $mt={-1}>
        <EditRow>
          <EditIcon><Search /></EditIcon>
          <EditText $mr={11}>查找</EditText>
          <Chev />
        </EditRow>
        <EditRow>
          <EditIcon><Replace /></EditIcon>
          <EditText>替换</EditText>
        </EditRow>
        <EditRow $pl={13}>
          <EditIcon $w={16}><Pointer /></EditIcon>
          <EditText $mr={4}>选择</EditText>
          <Chev />
        </EditRow>
      </GroupBody>
      <GroupFoot><GroupLabel>编辑</GroupLabel></GroupFoot>
    </Group>
  );
}

function AcrobatGroup() {
  return (
    <Group $w={128}>
      <GroupBody $row $pt={0} $pl={6}>
        <BigBtn $w={74}>
          <BigIcon $pl={4}><CreatePdf /></BigIcon>
          <BigText>创建并共享<br /><LatinLine>Adobe PDF</LatinLine></BigText>
        </BigBtn>
        <BigBtn $w={38}>
          <BigIcon><SignIcon /></BigIcon>
          <BigText>请求<br />签名</BigText>
        </BigBtn>
      </GroupBody>
      <GroupFoot><GroupLabel $latin>Adobe Acrobat</GroupLabel></GroupFoot>
    </Group>
  );
}

function HorizontalRuler() {
  return (
    <RulerWrap>
      <RulerTrack>
        {RULER.map((r, i) => (
          <RulerCell key={r.key} $ml={i === 0 ? -24 : 0}>
            <RulerTick />
            <RulerNum>{r.label}</RulerNum>
            <RulerTick />
          </RulerCell>
        ))}
      </RulerTrack>
      <IndentTop />
      <IndentRight />
    </RulerWrap>
  );
}

function Document() {
  return (
    <DocArea>
      <VColumn>
        <TabPicker />
        <VRuler>
          {V_TICKS.map((t) => <VTick key={t} />)}
        </VRuler>
      </VColumn>
      <DocCenter>
        <HorizontalRuler />
        <Page>
          <CropMarks>
            <CropMark $left />
            <CropMark />
          </CropMarks>
          <BodyText>
            <Line>方法 1：？</Line>
            <Line>方法 2：？</Line>
            <Line>方法 3：</Line>
          </BodyText>
          <RedBox />
          <ArrowSvg width="146" height="72" viewBox="0 0 146 72">
            <defs>
              <linearGradient id="tail" x1="0" y1="1" x2="1" y2="0">
                <stop offset="0.8" stopColor="#f43a3a" />
                <stop offset="1" stopColor="#f43a3a" stopOpacity="0.35" />
              </linearGradient>
            </defs>
            <polygon points="0,71 11,56 17,59 146,0 21,65 20,71" fill="url(#tail)" />
          </ArrowSvg>
        </Page>
      </DocCenter>
      <Scrollbar>
        <ScrollBtn $m="1px 0 0"><UpCaret /></ScrollBtn>
        <ScrollThumb />
        <ScrollGap />
        <ScrollBtn $m="0 0 3px"><Caret /></ScrollBtn>
      </Scrollbar>
    </DocArea>
  );
}

function Status() {
  return (
    <StatusBar>
      <StatusText $ml={-7}>第 1 页 , 共 1 页</StatusText>
      <StatusText $ml={20}>14 个字</StatusText>
      <StatusText $ml={19}>中文(中国)</StatusText>
      <StatusRight>
        <ViewBtn $w={40}><ViewRead /></ViewBtn>
        <ViewBtn $w={40} $on><ViewPrint /></ViewBtn>
        <ViewBtn $w={40}><ViewWeb /></ViewBtn>
        <ZoomSign $w={18}>−</ZoomSign>
        <ZoomTrack />
        <ZoomSign $w={16}>+</ZoomSign>
        <ZoomValue>100%</ZoomValue>
      </StatusRight>
    </StatusBar>
  );
}

export default function App() {
  return (
    <Window>
      <Global />
      <TitleRow />
      <Tabs />
      <Ribbon>
        <ClipboardGroup />
        <FontGroup />
        <ParagraphGroup />
        <StylesGroup />
        <EditGroup />
        <AcrobatGroup />
        <Collapse><CollapseIcon /></Collapse>
      </Ribbon>
      <Document />
      <Status />
      <Watermark>
        <WmPaw width="64" height="75" viewBox="0 0 64 75" fill="rgba(255,255,255,0.82)">
          <ellipse cx="9" cy="29" rx="7" ry="10" />
          <ellipse cx="24" cy="13" rx="7" ry="11" />
          <ellipse cx="43" cy="13" rx="7" ry="11" />
          <ellipse cx="56" cy="29" rx="7" ry="10" />
          <path d="M32 32c9 0 13 8 20 15 8 9 3 26-9 25-5-1-8-2-11-2s-7 1-11 2C9 73 4 56 12 47c7-7 11-15 20-15z" />
        </WmPaw>
        <WmDu>du</WmDu>
        <WmTop>
          <WmBai>Bai</WmBai>
          <WmExp>经验</WmExp>
        </WmTop>
        <WmUrl>jingyan.baidu.com</WmUrl>
      </Watermark>
      <ImeBar>
        <ImeCell>中</ImeCell>
        <ImeCell>°,</ImeCell>
        <ImeCell><Smile /></ImeCell>
        <ImeCell><Mic /></ImeCell>
        <ImeCell><Keyboard /></ImeCell>
        <ImeCell><Skin /></ImeCell>
        <ImeCell><Shirt /></ImeCell>
        <ImeCell><Apps /></ImeCell>
      </ImeBar>
      <SogouLogo width="31" height="30" viewBox="0 0 31 30">
        <path d="M3 6l20-5c2 0 3 1 4 3l3 17c0 2-1 3-3 3L8 29c-2 0-3-1-3-3z" fill="#f0531c" />
        <path d="M23 7c-5-2-13 0-13 4s11 2 12 6-7 6-12 4" fill="none" stroke="#fff" strokeWidth="3" />
      </SogouLogo>
    </Window>
  );
}
